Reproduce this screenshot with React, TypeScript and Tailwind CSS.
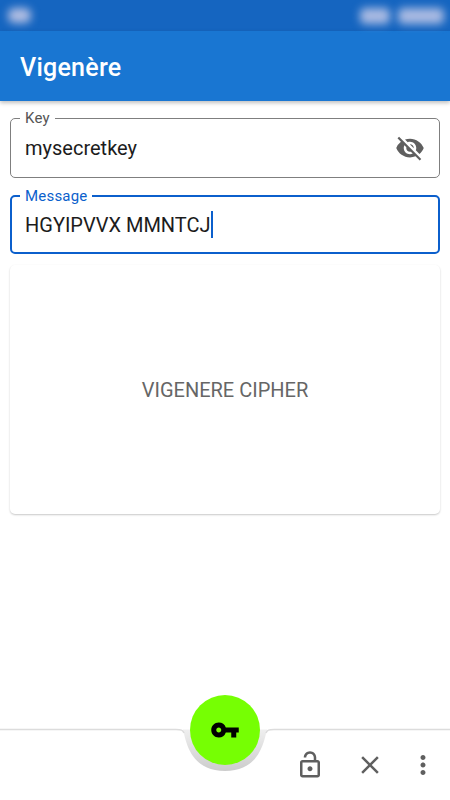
import React from "react";
import { MdVisibilityOff, MdVpnKey, MdOutlineLockOpen, MdClose, MdMoreVert } from "react-icons/md";

const font = "font-['Roboto',sans-serif]";

function Field({ label, value, focused, icon }: { label: string; value: string; focused?: boolean; icon?: React.ReactNode }) {
  return (
    <div className={`relative flex items-center rounded-[5px] pr-[14px] ${focused ? "h-[59px] border-2 border-[#0b5fcc] pl-[13px]" : "h-[60px] border border-[#7f7f7f] pl-[14px]"}`}>
      <span className={`absolute bg-white px-[5px] text-[15px] leading-[16px] tracking-[0.2px] ${focused ? "left-[8px] top-[-9px] text-[#0b5fcc]" : "left-[9px] top-[-9px] text-[#555555]"}`}>{label}</span>
      <span className="flex items-center text-[20px] leading-[26px] text-[#1c1c1c]">
        {value}
        {focused && <span className="ml-[0px] h-[27px] w-[2px] bg-[#0b5fcc]" />}
      </span>
      {icon && <span className="ml-auto flex text-[#5f5f5f]">{icon}</span>}
    </div>
  );
}

export default function App() {
  return (
    <div className={`${font} flex h-[800px] w-[450px] flex-col overflow-hidden bg-white`}>
      <div className="flex h-[31px] shrink-0 items-center justify-between bg-[#1565c0] pl-[8px] pr-[6px]">
        <div className="h-[15px] w-[23px] rounded-[6px] bg-[#b0bde2] blur-[4px]" />
        <div className="flex gap-[8px]">
          <div className="h-[16px] w-[30px] rounded-[5px] bg-[#a9bae2] blur-[4px]" />
          <div className="h-[16px] w-[46px] rounded-[5px] bg-[#a9bae2] blur-[4px]" />
        </div>
      </div>
      <header className="flex h-[70px] shrink-0 items-center bg-[#1976d2] pt-[3px] pl-[20px] shadow-[0_2px_4px_rgba(0,0,0,0.25)]">
        <h1 className="text-[25px] font-medium leading-[28px] tracking-[0.25px] text-white">Vigenère</h1>
      </header>

      <main className="flex flex-col px-[10px] pt-[17px]">
        <Field label="Key" value="mysecretkey" icon={<MdVisibilityOff size={30} />} />
        <div className="mt-[17px]">
          <Field label="Message" value="HGYIPVVX MMNTCJ" focused />
        </div>
        <div className="mt-[11px] flex h-[249px] items-center justify-center rounded-[5px] bg-white shadow-[0_1px_2px_rgba(0,0,0,0.22)]">
          <span className="text-[20px] leading-[24px] text-[#666666]">VIGENERE CIPHER</span>
        </div>
      </main>

      <footer className="relative mt-auto flex h-[72px] shrink-0 items-center justify-end">
        <svg className="absolute left-0 top-[-5px]" width="450" height="77" viewBox="0 0 450 77" fill="none">
          <defs>
            <filter id="s" x="-20%" y="-20%" width="140%" height="140%">
              <feGaussianBlur stdDeviation="0.7" />
            </filter>
            <linearGradient id="g" x1="0" y1="0" x2="0" y2="1">
              <stop offset="0" stopColor="#efefef" />
              <stop offset="1" stopColor="#cccccc" />
            </linearGradient>
          </defs>
          <path d="M183 6.5 C186 18 190 48 225 48 C260 48 264 18 267 6.5 Z" fill="url(#g)" filter="url(#s)" />
          <path d="M0 6.5 H176 C181 6.5 183 7 184 10 M266 10 C267 7 269 6.5 274 6.5 H450" stroke="#dcdcdc" strokeWidth="1.6" filter="url(#s)" />
        </svg>
        <button className="absolute left-[190px] top-[-33px] flex h-[70px] w-[70px] items-center justify-center rounded-full bg-[#76ff03]">
          <MdVpnKey size={30} className="text-black" />
        </button>
        <div className="relative flex items-center pr-[12px] pt-[1px] text-[#5f5f5f]">
          <MdOutlineLockOpen size={30} />
          <MdClose size={30} className="ml-[30px]" />
          <MdMoreVert size={30} className="ml-[23px]" />
        </div>
      </footer>
    </div>
  );
}
